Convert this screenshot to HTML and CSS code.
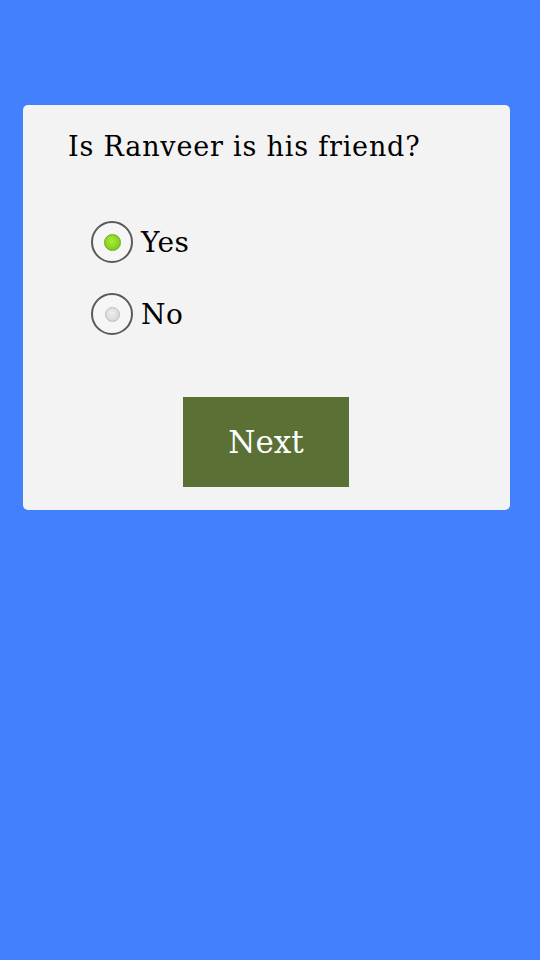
FILE: index.html
```html
<!DOCTYPE html>
<html>
<head>
<meta charset="utf-8">
<link rel="stylesheet" href="styles.css">
</head>
<body>
<div class="card">
  <div class="question">Is Ranveer is his friend?</div>
  <div class="options">
    <div class="option">
      <span class="radio checked"><span class="dot"></span></span>
      <span class="label">Yes</span>
    </div>
    <div class="option">
      <span class="radio"><span class="dot"></span></span>
      <span class="label">No</span>
    </div>
  </div>
  <div class="actions">
    <div class="next">Next</div>
  </div>
</div>
</body>
</html>
```
FILE: styles.css
```css
html, body {
  margin: 0;
  padding: 0;
  background: #4280fe;
  width: 540px;
  height: 960px;
}
body {
  font-family: "DejaVu Serif", "Liberation Serif", serif;
  padding-top: 105px;
  box-sizing: border-box;
}
.card {
  margin-left: 23px;
  width: 487px;
  height: 405px;
  background: #f3f3f3;
  border-radius: 5px;
  box-sizing: border-box;
  padding: 27px 0 0 45px;
}
.question {
  font-size: 27px;
  line-height: 30px;
  color: #000;
  letter-spacing: 0.8px;
}
.options {
  margin-top: 59px;
  margin-left: 23px;
  display: flex;
  flex-direction: column;
  gap: 30px;
}
.option {
  display: flex;
  align-items: center;
  gap: 8px;
  height: 42px;
}
.radio {
  width: 38px;
  height: 38px;
  border: 2px solid #5a5a5a;
  border-radius: 50%;
  display: flex;
  align-items: center;
  justify-content: center;
  background: #f6f6f6;
}
.dot {
  width: 15px;
  height: 15px;
  border-radius: 50%;
  background: radial-gradient(circle at 45% 40%, #eeeeee, #cfcfcf);
  border: 1px solid #bdbdbd;
  box-sizing: border-box;
}
.radio.checked .dot {
  width: 17px;
  height: 17px;
  background: radial-gradient(circle at 45% 40%, #a8ee3a, #70c010);
  border: 1px solid #6aa820;
}
.label {
  font-size: 28px;
  color: #000;
  letter-spacing: 0.4px;
}
.actions {
  margin-top: 62px;
  margin-left: 115px;
}
.next {
  width: 166px;
  height: 90px;
  background: #5a7035;
  color: #fff;
  font-size: 31px;
  display: flex;
  align-items: center;
  justify-content: center;
}
```
